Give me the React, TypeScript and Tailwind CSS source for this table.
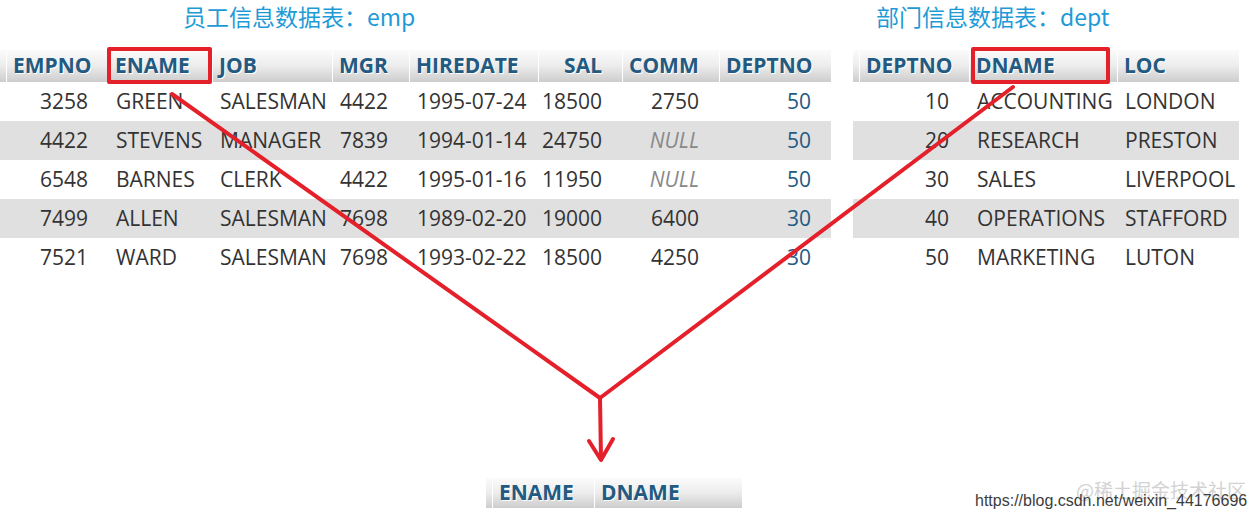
import React from "react";

type Col = { name: string; w: string; head?: "left" | "right"; cell?: "left" | "right"; link?: boolean };

const empCols: Col[] = [
    { name: "", w: "w-[6px]" },
    { name: "EMPNO", w: "w-[102px]", cell: "right" },
    { name: "ENAME", w: "w-[104px]" },
    { name: "JOB", w: "w-[120px]" },
    { name: "MGR", w: "w-[77px]" },
    { name: "HIREDATE", w: "w-[129px]" },
    { name: "SAL", w: "w-[84px]", head: "right", cell: "right" },
    { name: "COMM", w: "w-[97px]", cell: "right" },
    { name: "DEPTNO", w: "w-[112px]", cell: "right", link: true },
];

const empRows: string[][] = [
    ["3258", "GREEN", "SALESMAN", "4422", "1995-07-24", "18500", "2750", "50"],
    ["4422", "STEVENS", "MANAGER", "7839", "1994-01-14", "24750", "NULL", "50"],
    ["6548", "BARNES", "CLERK", "4422", "1995-01-16", "11950", "NULL", "50"],
    ["7499", "ALLEN", "SALESMAN", "7698", "1989-02-20", "19000", "6400", "30"],
    ["7521", "WARD", "SALESMAN", "7698", "1993-02-22", "18500", "4250", "30"],
];

const deptCols: Col[] = [
    { name: "", w: "w-[6px]" },
    { name: "DEPTNO", w: "w-[110px]", cell: "right" },
    { name: "DNAME", w: "w-[148px]" },
    { name: "LOC", w: "w-[122px]" },
];

const deptRows: string[][] = [
    ["10", "ACCOUNTING", "LONDON"],
    ["20", "RESEARCH", "PRESTON"],
    ["30", "SALES", "LIVERPOOL"],
    ["40", "OPERATIONS", "STAFFORD"],
    ["50", "MARKETING", "LUTON"],
];

const resultCols: Col[] = [
    { name: "", w: "w-[5px]" },
    { name: "ENAME", w: "w-[102px]" },
    { name: "DNAME", w: "w-[148px]" },
];

function HeaderRow({ cols, height }: { cols: Col[]; height: string }) {
    return (
        <div className={`flex ${height}`}>
            {cols.map((c, i) => (
                <div
                    key={i}
                    className={`${c.w} shrink-0 flex items-center bg-linear-to-b from-[#fbfbfb] via-[#ececec] to-[#cdcdcd] text-[21px] font-bold text-[#235a81] [text-shadow:1px_1px_0_#fff] ${i > 0 ? "border-l border-white" : ""} ${c.head === "right" ? "justify-end pr-5" : "pl-1.5"}`}
                >
                    {c.name}
                </div>
            ))}
        </div>
    );
}

function DataTable({ cols, rows }: { cols: Col[]; rows: string[][] }) {
    return (
        <div className="font-['Open_Sans','Noto_Sans',sans-serif]">
            <HeaderRow cols={cols} height="h-8" />
            {rows.map((row, r) => (
                <div key={r} className={`flex h-[39px] ${r % 2 === 1 ? "bg-[#e0e0e0]" : "bg-white"}`}>
                    {cols.map((c, i) => {
                        if (i === 0) return <div key={i} className={`${c.w} shrink-0`} />;
                        const v = row[i - 1];
                        const isNull = v === "NULL";
                        return (
                            <div
                                key={i}
                                className={`${c.w} shrink-0 flex items-center text-[21px] ${c.cell === "right" ? "justify-end pr-5" : "pl-2"} ${isNull ? "italic text-[#888]" : c.link ? "text-[#235a81]" : "text-[#333]"}`}
                            >
                                {v}
                            </div>
                        );
                    })}
                </div>
            ))}
        </div>
    );
}

export default function App() {
    const title = "font-['Noto_Sans_CJK_SC','Noto_Sans',sans-serif] text-[23px] text-[#1e9bd7] leading-none";

    return (
        <div className="relative w-[1257px] h-[522px] bg-white overflow-hidden">
            <div className="flex">
                {/* 员工表 */}
                <div className="w-[831px] shrink-0">
                    <div className="h-[50px] pl-[183px] pt-[5px]">
                        <span className={title}>员工信息数据表：emp</span>
                    </div>
                    <DataTable cols={empCols} rows={empRows} />
                </div>

                {/* 部门表 */}
                <div className="ml-[22px] w-[386px] shrink-0">
                    <div className="h-[50px] pl-[23px] pt-[5px]">
                        <span className={title}>部门信息数据表：dept</span>
                    </div>
                    <DataTable cols={deptCols} rows={deptRows} />
                </div>
            </div>

            {/* 结果 */}
            <div className="mt-[201px] ml-[486px] font-['Open_Sans','Noto_Sans',sans-serif]">
                <HeaderRow cols={resultCols} height="h-[30px]" />
            </div>

            {/* 标注 */}
            <svg className="absolute inset-0 pointer-events-none" width="1257" height="522" viewBox="0 0 1257 522">
                <g fill="none" stroke="#e4202a" strokeWidth="4" strokeLinecap="round" strokeLinejoin="round">
                    <rect x="109" y="49" width="101" height="33" strokeLinecap="butt" />
                    <rect x="973" y="49" width="135" height="33" strokeLinecap="butt" />
                    <polyline points="172,94 600,398 1013,87" />
                    <line x1="600" y1="398" x2="601" y2="459" />
                    <polyline points="589,441 601,460 613,439" />
                </g>
            </svg>

            {/* 水印 */}
            <div className="absolute left-[1076px] top-[480px] font-['Noto_Sans_CJK_SC',sans-serif] text-[19px] text-[#c8c8c8] leading-none whitespace-nowrap opacity-80">
                @稀土掘金技术社区
            </div>
            <div className="absolute left-[975px] top-[493px] font-['Liberation_Sans',Arial,sans-serif] text-[16px] text-[#3c3c3c] leading-none whitespace-nowrap">
                https://blog.csdn.net/weixin_44176696
            </div>
        </div>
    );
}
